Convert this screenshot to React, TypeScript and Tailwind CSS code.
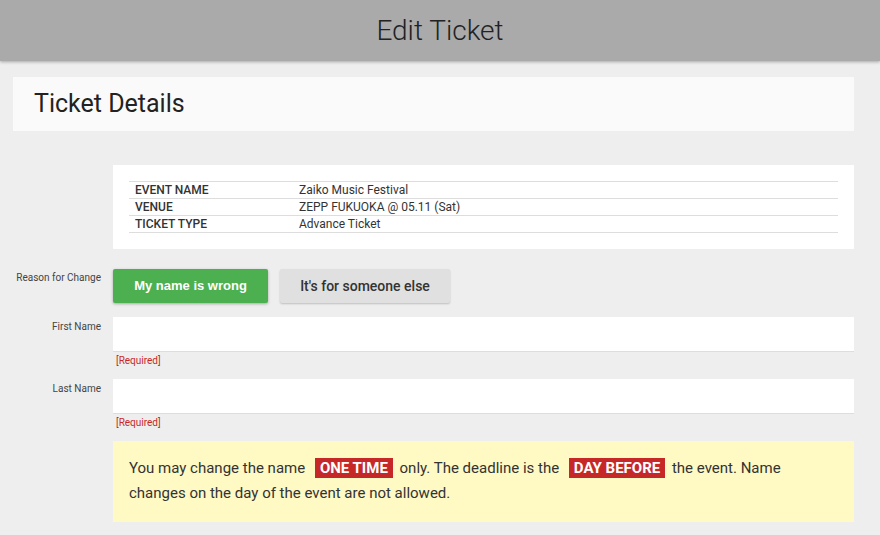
import React from "react";

const Badge = ({ children }: { children: React.ReactNode }) => (
  <span className="ml-[6px] mr-[3px] inline-block bg-[#c62828] px-[5px] text-[15px] font-bold leading-[20px] text-white">{children}</span>
);

export default function App() {
  return (
    <div className="min-h-[535px] w-[880px] bg-[#eeeeee] font-['Roboto',sans-serif] text-[#333]">
      <div className="relative z-10 flex h-[61px] items-center justify-center bg-[#aaaaaa] shadow-[0_1px_3px_rgba(0,0,0,0.3)]">
        <h1 className="pt-[1px] text-[28px] font-light text-[#222]">Edit Ticket</h1>
      </div>
      <div className="pl-[13px] pr-[26px] pt-[16px]">
        <div className="flex h-[54px] items-center bg-[#fafafa] pl-[21px]">
          <h2 className="text-[25px] font-normal text-[#222]">Ticket Details</h2>
        </div>
        <div className="mt-[34px] ml-[100px] bg-white px-[16px] py-[16px]">
          <table className="w-full border-collapse text-[12px] leading-[16px]">
            <tbody>
              {[
                ["EVENT NAME", "Zaiko Music Festival"],
                ["VENUE", "ZEPP FUKUOKA @ 05.11 (Sat)"],
                ["TICKET TYPE", "Advance Ticket"],
              ].map(([k, v]) => (
                <tr key={k} className="border-y border-[#dddddd]">
                  <td className="w-[170px] pl-[6px] font-medium text-[#333]">{k}</td>
                  <td className="text-[#333]">{v}</td>
                </tr>
              ))}
            </tbody>
          </table>
        </div>
        <div className="mt-[20px] flex">
          <div className="w-[100px] pr-[12px] pt-[1px] text-right text-[10px] text-[#444]">Reason for Change</div>
          <div className="flex gap-[12px]">
            <button className="h-[34px] w-[155px] rounded-[2px] bg-[#4caf50] font-['Liberation_Sans',Arial,sans-serif] text-[13px] font-bold text-white shadow-[0_1px_3px_rgba(0,0,0,0.3)]">My name is wrong</button>
            <button className="h-[34px] w-[170px] rounded-[2px] bg-[#e0e0e0] text-[14px] font-medium text-[#333] shadow-[0_1px_2px_rgba(0,0,0,0.2)]">It's for someone else</button>
          </div>
        </div>
        {["First Name", "Last Name"].map((l, i) => (
          <div key={l} className={`flex ${i === 0 ? "mt-[14px]" : "mt-[11px]"}`}>
            <div className="w-[100px] pr-[12px] pt-[2px] text-right text-[10px] text-[#444]">{l}</div>
            <div className="flex-1">
              <div className="h-[35px] border-b border-[#dddddd] bg-white"></div>
              <div className="mt-[2px] pl-[3px] text-[10px] leading-[14px] text-[#c62828]">[Required]</div>
            </div>
          </div>
        ))}
        <div className="mt-[11px] ml-[100px] bg-[#fff9c4] px-[16px] pb-[16px] pt-[15px] text-[15px] leading-[25px] text-[#333]">
          You may change the name <Badge>ONE TIME</Badge> only. The deadline is the <Badge>DAY BEFORE</Badge> the event. Name changes on the day of the event are not allowed.
        </div>
      </div>
    </div>
  );
}
